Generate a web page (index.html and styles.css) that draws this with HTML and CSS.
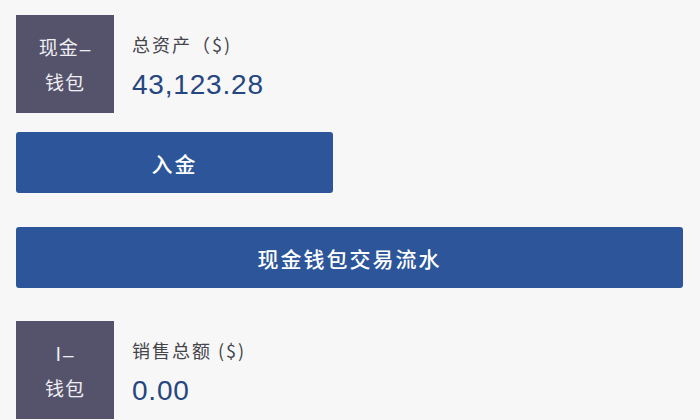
FILE: index.html
```html
<!DOCTYPE html>
<html lang="zh">
<head>
<meta charset="utf-8">
<link rel="stylesheet" href="styles.css">
</head>
<body>
<div class="page">
  <section class="wallet">
    <div class="tag"><span>现金<span class="dash">–</span></span><span>钱包</span></div>
    <div class="info">
      <div class="label">总资产（$)</div>
      <div class="value">43,123.28</div>
    </div>
  </section>
  <button class="btn btn-short">入金</button>
  <button class="btn btn-wide">现金钱包交易流水</button>
  <section class="wallet wallet-second">
    <div class="tag"><span>I<span class="dash">–</span></span><span>钱包</span></div>
    <div class="info">
      <div class="label">销售总额 ($)</div>
      <div class="value">0.00</div>
    </div>
  </section>
</div>
</body>
</html>
```

FILE: styles.css
```css
html, body {
  margin: 0;
  padding: 0;
  background: #f7f7f7;
  width: 700px;
  height: 420px;
  overflow: hidden;
}
.page {
  display: flex;
  flex-direction: column;
  align-items: flex-start;
  padding: 15px 17px 0 16px;
  font-family: "Liberation Sans", "Noto Sans CJK SC", sans-serif;
}
.wallet {
  display: flex;
  gap: 18px;
}
.tag {
  width: 98px;
  height: 98px;
  background: #55536b;
  color: #eeeef3;
  display: flex;
  flex-direction: column;
  align-items: center;
  justify-content: center;
  gap: 7px;
  font-size: 19px;
  line-height: 26px;
  letter-spacing: 1px;
  font-family: "Noto Sans CJK SC", sans-serif;
}
.dash {
  font-family: "Liberation Sans", sans-serif;
  margin-left: 1px;
}
.info {
  display: flex;
  flex-direction: column;
  padding-top: 17px;
}
.label {
  font-size: 18px;
  line-height: 24px;
  letter-spacing: 2px;
  color: #44444b;
  font-family: "Noto Sans CJK SC", sans-serif;
}
.value {
  margin-top: 13px;
  font-size: 28px;
  line-height: 32px;
  letter-spacing: 0.8px;
  color: #26467f;
  font-family: "Liberation Sans", sans-serif;
}
.btn {
  border: none;
  border-radius: 3px;
  background: #2c5699;
  color: #ffffff;
  height: 61px;
  font-size: 21px;
  font-family: "Noto Sans CJK SC", sans-serif;
  font-weight: 500;
  letter-spacing: 2px;
  padding: 0;
}
.btn-short {
  width: 317px;
  margin-top: 19px;
}
.btn-wide {
  width: 667px;
  margin-top: 34px;
}
.wallet-second {
  margin-top: 33px;
}
```
